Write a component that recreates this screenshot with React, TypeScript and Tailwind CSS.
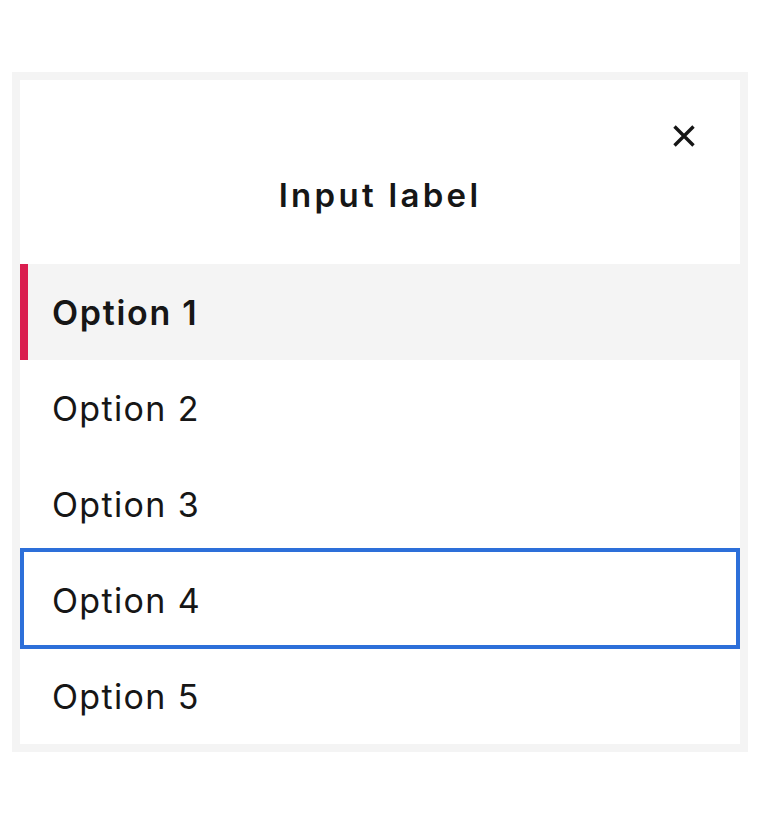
import React from 'react';

const options = ['Option 1', 'Option 2', 'Option 3', 'Option 4', 'Option 5'];

const App: React.FC = () => {
  const selected = 0;
  const focused = 3;

  return (
    <div className="w-[762px] h-[824px] bg-white pt-[72px] pl-[12px]" style={{ fontFamily: 'Inter, "Noto Sans", sans-serif' }}>
      <div className="w-[736px] border-8 border-[#f4f4f4] bg-white text-[#161616]">
        <div className="relative h-[184px] flex items-end justify-center pb-[49px]">
          <button className="absolute top-[44px] right-[44px] w-6 h-6 flex items-center justify-center">
            <svg width="24" height="24" viewBox="0 0 24 24" fill="none">
              <path d="M2.5 2.5 L21.5 21.5 M21.5 2.5 L2.5 21.5" stroke="#161616" strokeWidth="3.4" />
            </svg>
          </button>
          <h2 className="text-[33px] leading-[40px] font-semibold tracking-[0.1em]">Input label</h2>
        </div>
        <ul>
          {options.map((opt, i) => (
            <li
              key={opt}
              className={`relative h-[96px] flex items-center pl-[32px] text-[34px] ${i === selected ? 'bg-[#f4f4f4] font-semibold tracking-[0.05em]' : 'font-normal tracking-[0.04em]'}`}
            >
              {i === selected && <span className="absolute left-0 top-0 bottom-0 w-[8px] bg-[#da1e4f]" />}
              {i === focused && <span className="absolute left-0 right-0 -top-1 -bottom-px border-4 border-[#2d6fd9]" />}
              <span className="relative">{opt}</span>
            </li>
          ))}
        </ul>
      </div>
    </div>
  );
};

export default App;
